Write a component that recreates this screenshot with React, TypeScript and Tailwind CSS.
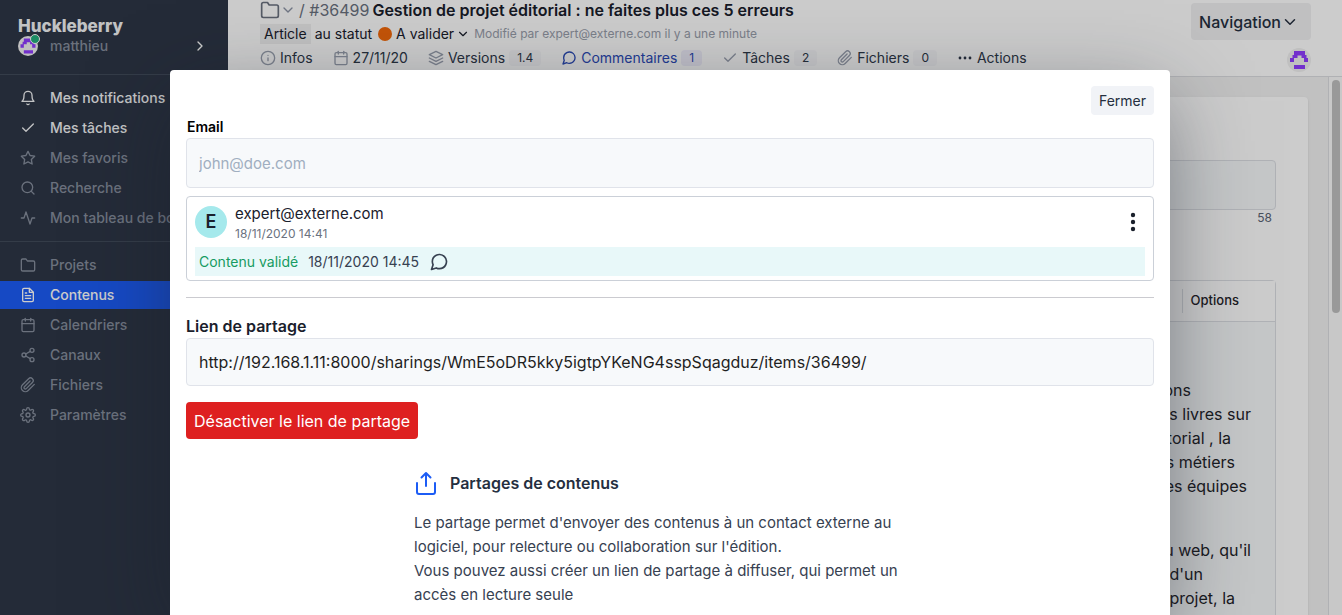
import React from "react";
import {
  FiActivity,
  FiBell,
  FiCalendar,
  FiCheck,
  FiChevronDown,
  FiChevronRight,
  FiFileText,
  FiFolder,
  FiInfo,
  FiLayers,
  FiMessageCircle,
  FiPaperclip,
  FiSearch,
  FiSettings,
  FiShare2,
  FiStar,
} from "react-icons/fi";

type IconType = React.ComponentType<{ className?: string }>;

function ShareUpIcon({ className }: { className?: string }) {
  return (
    <svg className={className} viewBox="0 0 24 24" fill="none" stroke="currentColor" strokeWidth="2" strokeLinecap="round" strokeLinejoin="round" aria-hidden="true">
      <path d="M3 12v9a2 2 0 0 0 2 2h14a2 2 0 0 0 2-2v-9" />
      <path d="M12 15V2M7.500 6.500 12 2l4.500 4.500" />
    </svg>
  );
}

function Identicon({ className }: { className?: string }) {
  return (
    <svg className={className} viewBox="0 0 24 24" aria-hidden="true">
      <circle cx="12" cy="12" r="12" fill="#f0f0f0" />
      <path fill="#8f3cff" d="M7 3h11v4h1.500v3H21v4h-4v-4h-2.500V7.500h-4V10H7v4H3v-4h2.500V7H7zM7 17h11v4H7z" />
    </svg>
  );
}

const personal: { label: string; icon: IconType; bright?: boolean }[] = [
  { label: "Mes notifications", icon: FiBell, bright: true },
  { label: "Mes tâches", icon: FiCheck, bright: true },
  { label: "Mes favoris", icon: FiStar },
  { label: "Recherche", icon: FiSearch },
  { label: "Mon tableau de bord", icon: FiActivity },
];

const workspace: { label: string; icon: IconType; active?: boolean }[] = [
  { label: "Projets", icon: FiFolder },
  { label: "Contenus", icon: FiFileText, active: true },
  { label: "Calendriers", icon: FiCalendar },
  { label: "Canaux", icon: FiShare2 },
  { label: "Fichiers", icon: FiPaperclip },
  { label: "Paramètres", icon: FiSettings },
];

function NavItem({ label, icon: Icon, bright, active }: { label: string; icon: IconType; bright?: boolean; active?: boolean }) {
  const tone = active ? "bg-[#1c5cf5] text-white" : bright ? "text-gray-100" : "text-[#868e9d]";
  return (
    <a href="#" className={`flex h-7 items-center gap-3.5 whitespace-nowrap pl-5 text-sm font-medium ${tone}`}>
      <Icon className="size-4 shrink-0" />
      {label}
    </a>
  );
}

function Sidebar() {
  return (
    <aside className="w-[228px] shrink-0 overflow-hidden bg-[#2d3646]">
      <div className="flex h-[75px] flex-col border-b border-[#414b5b] px-[18px] pt-4">
        <div className="text-[17px] leading-5 font-extrabold text-gray-100">Huckleberry</div>
        <button type="button" className="flex h-5 items-center text-sm font-medium text-[#868e9d]">
          <span className="relative mr-3 block">
            <Identicon className="size-5" />
            <span className="absolute -top-0.5 -right-0.5 size-2.5 rounded-full border border-white bg-[#22b07d]" />
          </span>
          matthieu
          <FiChevronRight className="mr-0.5 ml-auto size-4 text-white" />
        </button>
      </div>
      <nav className="flex flex-col gap-0.5 border-b border-[#414b5b] py-[9px]">
        {personal.map((item) => (
          <NavItem key={item.label} {...item} />
        ))}
      </nav>
      <nav className="flex flex-col gap-0.5 py-[9px]">
        {workspace.map((item) => (
          <NavItem key={item.label} {...item} />
        ))}
      </nav>
    </aside>
  );
}

function Tab({ label, icon, count, active }: { label: string; icon: React.ReactNode; count?: string; active?: boolean }) {
  return (
    <a href="#" className={`flex items-center gap-1 ${active ? "text-[#2a4ab8]" : "text-[#2d3748]"}`}>
      {icon}
      <span>{label}</span>
      {count && (
        <span className={`rounded px-2 text-xs leading-4 ${active ? "bg-[#f1effc]" : "bg-[#f8f8fa]"}`}>{count}</span>
      )}
    </a>
  );
}

function Header() {
  const iconClass = "size-4 text-[#9aa1b0]";
  return (
    <header className="flex justify-between border-b border-[#dcdee2] bg-white pr-[31px] pl-8">
      <div className="pb-1.5 whitespace-nowrap">
        <div className="mb-0.5 flex h-5 items-center text-base">
          <FiFolder className="size-5 text-[#6b7280]" />
          <FiChevronDown className="mr-[3px] size-4 text-[#8b93a5]" />
          <span className="mr-[3px] text-[#6b7280]">/ #36499</span>
          <h1 className="font-semibold text-[#1a202c]">Gestion de projet éditorial : ne faites plus ces 5 erreurs</h1>
        </div>
        <div className="flex h-6 items-center text-sm text-[#1a202c]">
          <span className="mr-1 bg-[#f0f0f2] px-1">Article</span>
          <span>au statut</span>
          <span className="mr-1 ml-1.5 size-3.5 rounded-full bg-[#f66a0a]" />
          <button type="button" className="flex items-center">
            A valider
            <FiChevronDown className="ml-0.5 size-3.5" />
          </button>
          <span className="ml-1 text-xs text-[#9aa0ac]">Modifié par expert@externe.com il y a une minute</span>
        </div>
        <nav className="flex h-6 items-center gap-5 text-sm">
          <Tab label="Infos" icon={<FiInfo className={iconClass} />} />
          <Tab label="27/11/20" icon={<FiCalendar className={iconClass} />} />
          <Tab label="Versions" count="1.4" icon={<FiLayers className={iconClass} />} />
          <Tab label="Commentaires" count="1" active icon={<FiMessageCircle className="size-4" />} />
          <Tab label="Tâches" count="2" icon={<FiCheck className={iconClass} />} />
          <Tab label="Fichiers" count="0" icon={<FiPaperclip className={iconClass} />} />
          <Tab
            label="Actions"
            icon={
              <svg className="size-4" viewBox="0 0 16 16" fill="currentColor" aria-hidden="true">
                <circle cx="3" cy="8" r="1.400" />
                <circle cx="8" cy="8" r="1.400" />
                <circle cx="13" cy="8" r="1.400" />
              </svg>
            }
          />
        </nav>
      </div>
      <div className="flex flex-col items-end gap-2 pt-[3px]">
        <button type="button" className="flex h-[37px] items-center rounded bg-[#f0f0f2] pr-3 pl-2 text-base font-medium text-[#252f3f]">
          Navigation
          <FiChevronDown className="size-[18px]" />
        </button>
        <Identicon className="size-6" />
      </div>
    </header>
  );
}

function Editor() {
  return (
    <div className="flex min-h-0 flex-1 bg-[#f2f2f2]">
      <main className="flex-1 overflow-hidden pt-5 pr-5 pl-8">
        <div className="min-h-full rounded bg-white px-8 pt-[63px] shadow">
          <input aria-label="Titre" className="block h-[50px] w-full rounded border border-[#dcdfe4] bg-[#f7f9fb]" />
          <div className="pr-1 text-right text-xs leading-4 text-[#5b6475]">58</div>
          <div className="mt-[54px] rounded border border-[#dcdfe4] bg-[#f7f9fb] text-[#1f2329]">
            <div className="flex h-[41px] items-center justify-end border-b border-[#dcdfe4] bg-white pr-9 text-[13px] font-medium">
              <span className="mr-3">"</span>
              <button type="button" className="h-6 border-l border-[#dcdfe4] pl-2">Options</button>
            </div>
            <div className="pt-14 pb-12 text-right text-base leading-6">
              <p className="pr-21">tions</p>
              <p className="pr-6">es livres sur</p>
              <p className="pr-11">torial , la</p>
              <p className="pr-10">s métiers</p>
              <p className="pr-7">es équipes</p>
              <p className="pt-10 pr-6">du web, qu'il</p>
              <p className="pr-18">d'un</p>
              <p className="pr-10">projet, la</p>
            </div>
          </div>
        </div>
      </main>
      <div className="w-3.5 border-l border-[#dcdee2] bg-[#fafafa] pt-[3px] pl-[3px]">
        <div className="h-[233px] w-2 rounded-full bg-[#c0c0c0]" />
      </div>
    </div>
  );
}

function ShareDialog() {
  return (
    <section
      role="dialog"
      aria-modal="true"
      aria-label="Partages de contenus"
      className="flex min-h-full w-full max-w-[1000px] flex-col rounded-t bg-white p-4 text-base text-[#1a202c] shadow-[0_25px_80px_-6px_rgba(26,32,44,0.5)] *:shrink-0"
    >
      <button type="button" className="h-[29px] self-end rounded bg-[#f1f3f7] px-2 text-sm text-[#252f3f]">Fermer</button>
      <label htmlFor="email" className="mt-0.5 px-px text-sm font-semibold text-black">Email</label>
      <input
        id="email"
        type="email"
        placeholder="john@doe.com"
        className="mt-px h-[50px] w-full rounded border border-[#e0e3ea] bg-[#f7f9fb] px-3 text-[15px] placeholder:text-[#a0aec0]"
      />

      <article className="mt-2 rounded border border-[#cbd0d8] px-2 pt-[5px] pb-1">
        <div className="flex items-center">
          <div className="flex size-8 items-center justify-center rounded-full bg-[#a5e9ec] text-lg font-semibold">E</div>
          <div className="ml-2">
            <div className="text-[15px] leading-6">expert@externe.com</div>
            <div className="text-xs leading-4 text-[#6b7280]">18/11/2020 14:41</div>
          </div>
          <button type="button" aria-label="Plus d'options" className="ml-auto">
            <svg className="size-6" viewBox="0 0 24 24" fill="currentColor" aria-hidden="true">
              <circle cx="12" cy="5" r="2.200" />
              <circle cx="12" cy="12" r="2.200" />
              <circle cx="12" cy="19" r="2.200" />
            </svg>
          </button>
        </div>
        <div className="mt-[5px] flex h-[29px] items-center bg-[#e8f8f9] px-1 text-sm">
          <span className="text-[#169b62]">Contenu validé</span>
          <span className="ml-2.5 text-[#374151]">18/11/2020 14:45</span>
          <FiMessageCircle className="ml-2.5 size-5 text-[#374151]" />
        </div>
      </article>

      <hr className="my-4 border-[#cbcbd0]" />

      <label htmlFor="share-link" className="font-semibold">Lien de partage</label>
      <input
        id="share-link"
        readOnly
        defaultValue="http://192.168.1.11:8000/sharings/WmE5oDR5kky5igtpYKeNG4sspSqagduz/items/36499/"
        className="h-12 w-full rounded border border-[#e0e3ea] bg-[#f7f9fb] px-3 text-[#1f1f1f]"
      />
      <button type="button" className="mt-4 h-[37px] self-start rounded bg-[#de2020] px-2 text-white">
        Désactiver le lien de partage
      </button>

      <div className="mx-auto mt-8 w-full max-w-lg">
        <div className="flex h-6 items-center gap-3 font-semibold text-[#252f3f]">
          <ShareUpIcon className="size-6 text-[#1c5cf5]" />
          <h2>Partages de contenus</h2>
        </div>
        <p className="mt-4 text-[15px] leading-6 text-[#374151]">
          Le partage permet d'envoyer des contenus à un contact externe au logiciel, pour relecture ou collaboration sur l'édition.
          <br />
          Vous pouvez aussi créer un lien de partage à diffuser, qui permet un accès en lecture seule
        </p>
      </div>
    </section>
  );
}

export default function App() {
  return (
    <div className="relative flex h-screen overflow-hidden font-['Inter',sans-serif]">
      <Sidebar />
      <div className="flex min-w-0 flex-1 flex-col">
        <Header />
        <Editor />
      </div>
      <div className="absolute inset-0 flex justify-center overflow-hidden bg-black/20 pt-[70px] pr-0.5">
        <ShareDialog />
      </div>
    </div>
  );
}
